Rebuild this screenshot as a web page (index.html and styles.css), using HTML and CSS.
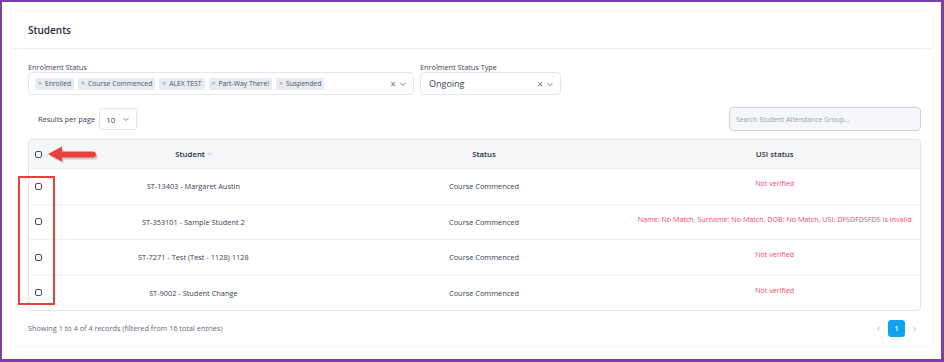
FILE: index.html
```html
<!DOCTYPE html>
<html lang="en">
<head>
    <meta charset="UTF-8">
    <title>Students</title>
    <link rel="stylesheet" href="styles.css">
</head>
<body>
    <div class="frame">
        <div class="card">
            <div class="card-header">
                <h1>Students</h1>
            </div>

            <div class="card-body">
                <div class="filters">
                    <div class="filter filter-wide">
                        <label>Enrolment Status</label>
                        <div class="select">
                            <div class="tags">
                                <span class="tag"><span class="tag-x">×</span>Enrolled</span>
                                <span class="tag"><span class="tag-x">×</span>Course Commenced</span>
                                <span class="tag"><span class="tag-x">×</span>ALEX TEST</span>
                                <span class="tag"><span class="tag-x">×</span>Part-Way There!</span>
                                <span class="tag"><span class="tag-x">×</span>Suspended</span>
                            </div>
                            <span class="select-clear">×</span>
                            <svg class="chevron" width="8" height="8" viewBox="0 0 8 8"><path d="M1.5 3l2.5 2.5L6.5 3" fill="none" stroke="#6b7280" stroke-width="0.9"/></svg>
                        </div>
                    </div>
                    <div class="filter filter-narrow">
                        <label>Enrolment Status Type</label>
                        <div class="select">
                            <div class="select-value">Ongoing</div>
                            <span class="select-clear">×</span>
                            <svg class="chevron" width="8" height="8" viewBox="0 0 8 8"><path d="M1.5 3l2.5 2.5L6.5 3" fill="none" stroke="#6b7280" stroke-width="0.9"/></svg>
                        </div>
                    </div>
                </div>

                <div class="toolbar">
                    <div class="per-page">
                        <span>Results per page</span>
                        <div class="per-page-select">
                            10
                            <svg width="8" height="8" viewBox="0 0 8 8"><path d="M1.5 3l2.5 2.5L6.5 3" fill="none" stroke="#6b7280" stroke-width="0.9"/></svg>
                        </div>
                    </div>
                    <input class="search" type="text" placeholder="Search Student Attendance Group...">
                </div>

                <div class="table">
                    <div class="row head">
                        <div class="cell check"><span class="box"></span></div>
                        <div class="cell">Student <span class="sort">^</span></div>
                        <div class="cell">Status</div>
                        <div class="cell">USI status</div>
                    </div>
                    <div class="row">
                        <div class="cell check"><span class="box"></span></div>
                        <div class="cell">ST-13403 - Margaret Austin</div>
                        <div class="cell">Course Commenced</div>
                        <div class="cell usi">Not verified</div>
                    </div>
                    <div class="row">
                        <div class="cell check"><span class="box"></span></div>
                        <div class="cell">ST-353101 - Sample Student 2</div>
                        <div class="cell">Course Commenced</div>
                        <div class="cell usi">Name: No Match, Surname: No Match, DOB: No Match, USI: DFSDFDSFDS is Invalid</div>
                    </div>
                    <div class="row">
                        <div class="cell check"><span class="box"></span></div>
                        <div class="cell">ST-7271 - Test (Test - 1128) 1128</div>
                        <div class="cell">Course Commenced</div>
                        <div class="cell usi">Not verified</div>
                    </div>
                    <div class="row">
                        <div class="cell check"><span class="box"></span></div>
                        <div class="cell">ST-9002 - Student Change</div>
                        <div class="cell">Course Commenced</div>
                        <div class="cell usi">Not verified</div>
                    </div>
                </div>

                <div class="footer">
                    <span class="info">Showing 1 to 4 of 4 records (filtered from 16 total entries)</span>
                    <div class="pager">
                        <span class="pager-arrow">‹</span>
                        <span class="pager-page">1</span>
                        <span class="pager-arrow">›</span>
                    </div>
                </div>
            </div>
        </div>

        <!-- annotations -->
        <svg class="arrow" width="58" height="22" viewBox="0 0 58 22">
            <path d="M2 9l14-7.5v5h31a3 3 0 0 1 0 6H16v4z" fill="#7a7a7a" opacity="0.35" transform="translate(1.5 2)"/>
            <path d="M2 9l14-7.5v5h31a3 3 0 0 1 0 6H16v4z" fill="#e8403a"/>
        </svg>
        <div class="highlight"></div>
    </div>
</body>
</html>
```

FILE: styles.css
```css
body {
    margin: 0;
    background: #fff;
    font-family: 'Open Sans', 'Noto Sans', sans-serif;
    color: #3b4152;
}

.frame {
    position: relative;
    width: 944px;
    height: 362px;
    box-sizing: border-box;
    border: 2px solid #7b3fa6;
    border-bottom-width: 3px;
    border-right-width: 3px;
    padding: 10px 9px 0 10px;
}

.card {
    background: #fff;
    border-radius: 4px;
    box-shadow: 0 0 5px rgba(30, 40, 60, 0.06);
}

.card-header {
    height: 36px;
    padding: 0 16px;
    display: flex;
    align-items: center;
    border-bottom: 1px solid #eef0f3;
}

.card-header h1 {
    margin: 0;
    font-size: 10px;
    font-weight: 600;
    color: #262b38;
}

.card-body {
    padding: 13px 11px 0 16px;
}

.filters {
    display: flex;
    gap: 6px;
}

.filter label {
    display: block;
    font-size: 7.3px;
    line-height: 10px;
    color: #3b4152;
}

.filter-wide { width: 386px; }
.filter-narrow { width: 141px; }

.select {
    height: 23px;
    box-sizing: border-box;
    border: 1px solid #e4e7ec;
    border-radius: 4px;
    display: flex;
    align-items: center;
    padding: 0 6px 0 6px;
}

.tags {
    flex: 1;
    display: flex;
    gap: 4px;
}

.tag {
    height: 12px;
    display: inline-flex;
    align-items: center;
    padding: 0 3px;
    border-radius: 2px;
    background: #e9ebf2;
    font-size: 6.8px;
    color: #4f5566;
}

.tag-x {
    color: #9096a5;
    margin-right: 3px;
}

.select-value {
    flex: 1;
    font-size: 9px;
    padding-left: 2px;
    color: #3b4152;
}

.select-clear {
    font-size: 10px;
    color: #6b7280;
    margin-right: 3px;
}

.chevron {
    display: block;
}

.toolbar {
    margin-top: 12px;
    height: 24px;
    display: flex;
    justify-content: space-between;
    align-items: center;
}

.per-page {
    display: flex;
    align-items: center;
    gap: 4px;
    padding-left: 10px;
    font-size: 7.4px;
}

.per-page-select {
    width: 38px;
    height: 22px;
    box-sizing: border-box;
    border: 1px solid #e4e7ec;
    border-radius: 3px;
    display: flex;
    align-items: center;
    gap: 7px;
    padding-left: 6px;
    font-size: 8px;
}

.search {
    width: 192px;
    height: 24px;
    box-sizing: border-box;
    margin: 0;
    border: 1px solid #cfd4dc;
    border-radius: 4px;
    background: #f5f7fa;
    padding: 0 6px;
    font-family: inherit;
    font-size: 6.8px;
    outline: none;
}

.search::placeholder {
    color: #9aa0ad;
}

.table {
    margin-top: 8px;
    border: 1px solid #e3e6eb;
    border-radius: 4px;
    overflow: hidden;
}

.row {
    display: grid;
    grid-template-columns: 19px 1fr 1fr 1fr;
    height: 35.5px;
    border-top: 1px solid #eef0f3;
    box-sizing: border-box;
    font-size: 7.4px;
}

.row.head {
    height: 28px;
    border-top: none;
    background: #f5f6f8;
    font-size: 7.8px;
    font-weight: 600;
    color: #2a2f3c;
}

.cell {
    display: flex;
    align-items: center;
    justify-content: center;
    text-align: center;
}

.cell.check {
    justify-content: flex-end;
}

.cell.usi {
    color: #f04a6c;
    align-items: flex-start;
    padding-top: 9px;
    white-space: nowrap;
    font-size: 7.15px;
}

.box {
    width: 7px;
    height: 7px;
    box-sizing: border-box;
    border: 1px solid #4b5060;
    border-radius: 2px;
    margin-right: 6px;
}

.sort {
    color: #a3a8b4;
    font-weight: 400;
    margin-left: 3px;
    font-size: 6px;
}

.footer {
    display: flex;
    justify-content: space-between;
    align-items: center;
    height: 34px;
}

.info {
    font-size: 7.3px;
    color: #636a7a;
}

.pager {
    display: flex;
    align-items: center;
    gap: 8px;
    margin-right: 5px;
}

.pager-arrow {
    font-size: 10px;
    color: #b8bdc8;
}

.pager-page {
    width: 17px;
    height: 17px;
    border-radius: 3px;
    background: #0ea2ef;
    color: #fff;
    font-size: 7px;
    font-weight: 600;
    display: flex;
    align-items: center;
    justify-content: center;
}

/* red markers drawn over the table */
.arrow {
    position: absolute;
    left: 44px;
    top: 143px;
}

.highlight {
    position: absolute;
    left: 16px;
    top: 174px;
    width: 37px;
    height: 129px;
    box-sizing: border-box;
    border: 2px solid #e8403a;
}
```
